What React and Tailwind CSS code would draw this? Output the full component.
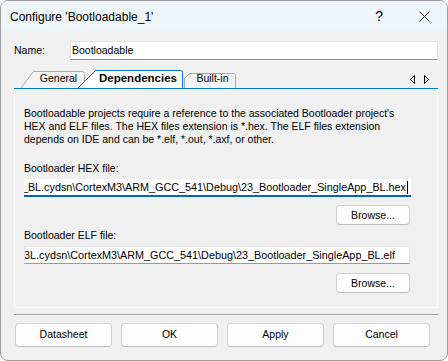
import React from 'react';

const Tabs = () => (
  <div className="relative h-[20px] mt-[9px]">
    <svg className="absolute inset-0" width="424" height="20" viewBox="0 0 424 20">
      {/* General */}
      <path d="M6.5,19.5 L19.5,2.5 L68.5,2.5 Q70.5,2.5 70.5,4.5 L70.5,19.5" fill="#f4f4f4" stroke="#a9a9a9" />
      {/* Built-in */}
      <path d="M170.5,19.5 L170.5,9.5 L175.5,4.5 L219.5,4.5 Q221.5,4.5 221.5,6.5 L221.5,19.5" fill="#f4f4f4" stroke="#a9a9a9" />
      {/* Dependencies (selected) */}
      <path d="M63.5,19.5 L81.5,1.5 L166.5,1.5 Q168.5,1.5 168.5,3.5 L168.5,19.5" fill="#ffffff" stroke="#0078d7" />
      <line x1="0" y1="19.5" x2="424" y2="19.5" stroke="#0078d7" />
      {/* scroll arrows */}
      <path d="M400.5,6.5 L396.5,10.5 L400.5,14.5 Z" fill="none" stroke="#000" />
      <path d="M410.5,6.5 L414.5,10.5 L410.5,14.5 Z" fill="none" stroke="#000" />
    </svg>
    <div className="relative flex items-center h-[20px] pb-[1px]">
      <span className="ml-[22px] w-[45px] text-center text-[10.5px]">General</span>
      <span className="ml-[17px] w-[80px] text-center text-[11.5px] font-bold">Dependencies</span>
      <span className="ml-[14px] w-[41px] text-center text-[10.5px]">Built-in</span>
    </div>
  </div>
);

const Btn = ({ children, className = '' }) => (
  <button className={`h-[24px] w-[97px] rounded-[4px] bg-[#fdfdfd] border border-[#d0d0d0] border-b-[#bdbdbd] text-[10.5px] ${className}`}>
    {children}
  </button>
);

const Browse = () => (
  <div className="flex justify-end pr-[27px]">
    <button className="h-[20px] w-[74px] rounded-[4px] bg-[#fdfdfd] border border-[#d0d0d0] border-b-[#bdbdbd] text-[10.5px]">
      Browse...
    </button>
  </div>
);

export default function App() {
  return (
    <div className="w-[448px] h-[361px] bg-white">
      <div className="h-full flex flex-col rounded-[8px] border border-[#9e9e9e] bg-[#f0f0f0] overflow-hidden font-['Liberation_Sans',Arial,sans-serif] text-black">
        {/* title bar */}
        <div className="h-[30px] shrink-0 bg-[#eef5f9] flex items-center pl-[9px] pr-[17px]">
          <span className="text-[12px] mt-[1px]">Configure 'Bootloadable_1'</span>
          <span className="ml-auto text-[14px] mr-[36px]">?</span>
          <svg width="11" height="11" viewBox="0 0 11 11">
            <path d="M0.5,0.5 L10.5,10.5 M10.5,0.5 L0.5,10.5" stroke="#222" strokeWidth="1" />
          </svg>
        </div>

        <div className="pl-[13px] pr-[9px] flex flex-col">
          {/* name row */}
          <div className="flex items-center h-[19px] mt-[10px]">
            <span className="w-[56px] text-[10.5px]">Name:</span>
            <div className="flex-1 h-[19px] bg-white border border-[#e3e3e3] border-b-[#8f8f8f] flex items-center pl-[1px] text-[10.5px]">
              Bootloadable
            </div>
          </div>

          <Tabs />

          {/* panel */}
          <div className="h-[219px] border-x border-b border-[#fbfbfb] pl-[9px] flex flex-col text-[10.5px] leading-[13px]">
            <div className="mt-[18px]">
              Bootloadable projects require a reference to the associated Bootloader project's<br />
              HEX and ELF files. The HEX files extension is *.hex. The ELF files extension<br />
              depends on IDE and can be *.elf, *.out, *.axf, or other.
            </div>

            <div className="mt-[16px]">Bootloader HEX file:</div>
            <div className="mt-[4px] w-[387px] h-[18px] bg-white border-b-2 border-[#0067c0] flex items-center justify-end overflow-hidden whitespace-nowrap pr-[3px] text-[10.8px]">
              <span>_BL.cydsn\CortexM3\ARM_GCC_541\Debug\23_Bootloader_SingleApp_BL.hex</span>
              <span className="w-[1px] h-[13px] bg-black ml-[1px] shrink-0" />
            </div>
            <div className="mt-[8px]">
              <Browse />
            </div>

            <div className="mt-[4px]">Bootloader ELF file:</div>
            <div className="mt-[4px] w-[386px] h-[18px] bg-white border border-[#e6e6e6] border-b-[#9a9a9a] flex items-center justify-end overflow-hidden whitespace-nowrap pr-[14px] text-[10.8px]">
              <span>3L.cydsn\CortexM3\ARM_GCC_541\Debug\23_Bootloader_SingleApp_BL.elf</span>
            </div>
            <div className="mt-[9px]">
              <Browse />
            </div>
          </div>

          {/* separator */}
          <div className="mt-[6px] h-[1px] bg-[#a0a0a0]" />
          <div className="h-[1px] bg-white" />

          {/* buttons */}
          <div className="mt-[7px] flex gap-[9px] pl-[1px]">
            <Btn>Datasheet</Btn>
            <Btn className="border-[#0067c0] border-b-[#0067c0]">OK</Btn>
            <Btn>Apply</Btn>
            <Btn>Cancel</Btn>
          </div>
        </div>
      </div>
    </div>
  );
}
